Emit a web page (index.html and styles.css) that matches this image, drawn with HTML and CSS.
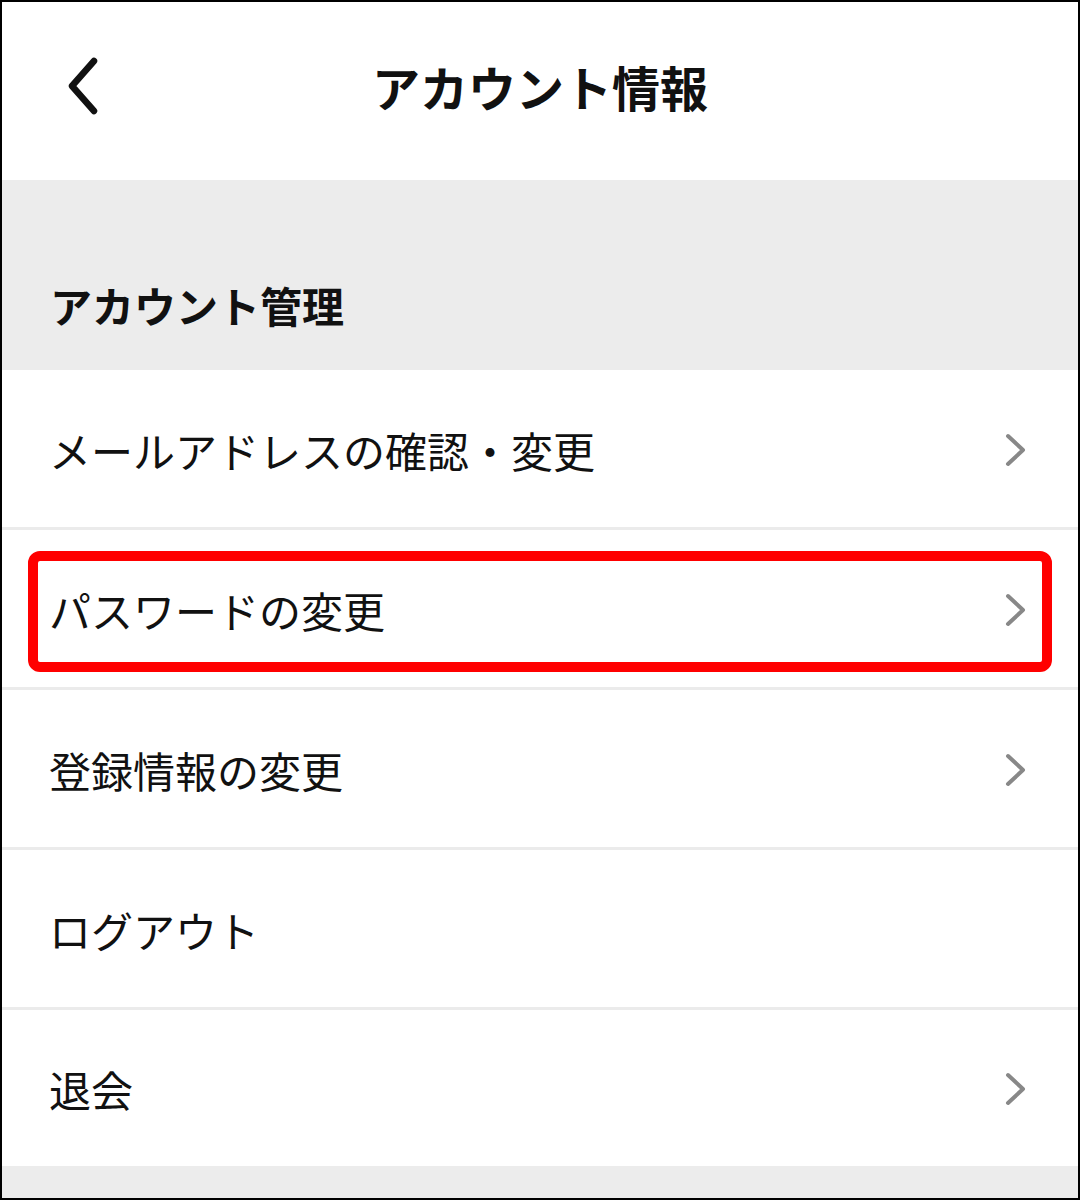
FILE: index.html
```html
<!DOCTYPE html>
<html lang="ja">
<head>
  <meta charset="UTF-8">
  <title>アカウント情報</title>
  <meta name="viewport" content="width=device-width, initial-scale=1">
  <link rel="stylesheet" href="styles.css">
</head>
<body>

<div class="frame">
  <header class="header">
    <a class="back" href="#">
      <svg width="40" height="60" viewBox="0 0 40 60">
        <path d="M30 5 L8 30 L30 55" fill="none" stroke="#111" stroke-width="6.5" stroke-linecap="round" stroke-linejoin="round"/>
      </svg>
    </a>
    <h1>アカウント情報</h1>
  </header>

  <div class="section-title">アカウント管理</div>

  <ul class="menu">
    <li class="item">
      <span>メールアドレスの確認・変更</span>
      <svg class="chev" width="24" height="36" viewBox="0 0 24 36"><path d="M4 4 L19 18 L4 32" /></svg>
    </li>
    <li class="item">
      <span>パスワードの変更</span>
      <svg class="chev" width="24" height="36" viewBox="0 0 24 36"><path d="M4 4 L19 18 L4 32" /></svg>
      <div class="highlight"></div>
    </li>
    <li class="item">
      <span>登録情報の変更</span>
      <svg class="chev" width="24" height="36" viewBox="0 0 24 36"><path d="M4 4 L19 18 L4 32" /></svg>
    </li>
    <li class="item">
      <span>ログアウト</span>
    </li>
    <li class="item">
      <span>退会</span>
      <svg class="chev" width="24" height="36" viewBox="0 0 24 36"><path d="M4 4 L19 18 L4 32" /></svg>
    </li>
  </ul>
</div>

</body>
</html>
```

FILE: styles.css
```css
* {
  box-sizing: border-box;
}
body {
  margin: 0;
  font-family: "Noto Sans CJK JP", "Noto Sans", sans-serif;
  color: #111;
}
.frame {
  width: 1080px;
  height: 1200px;
  border: 2px solid #000;
  background-color: #ececec;
  overflow: hidden;
}
.header {
  height: 178px;
  background-color: #fff;
  display: flex;
  align-items: center;
  justify-content: center;
  position: relative;
}
.back {
  position: absolute;
  left: 62px;
  top: 54px;
  display: block;
}
.header h1 {
  margin: 0;
  font-size: 48px;
  font-weight: 700;
  line-height: 1;
  letter-spacing: 0;
  padding-bottom: 10px;
}
.section-title {
  height: 190px;
  display: flex;
  align-items: flex-end;
  padding: 0 0 44px 48px;
  font-size: 42px;
  font-weight: 700;
  line-height: 42px;
}
.menu {
  list-style: none;
  margin: 0;
  padding: 0;
}
.item {
  position: relative;
  height: 160px;
  background-color: #fff;
  border-bottom: 3px solid #ebebeb;
  display: flex;
  align-items: center;
  justify-content: space-between;
  padding: 2px 50px 0 47px;
  font-size: 42px;
  line-height: 1;
}
.item:last-child {
  height: 156px;
  border-bottom: none;
}
.chev path {
  fill: none;
  stroke: #888;
  stroke-width: 4;
  stroke-linecap: round;
  stroke-linejoin: round;
}
.highlight {
  position: absolute;
  left: 26px;
  right: 26px;
  top: 21px;
  bottom: 15px;
  border: 10px solid #ff0000;
  border-radius: 12px;
}
```
